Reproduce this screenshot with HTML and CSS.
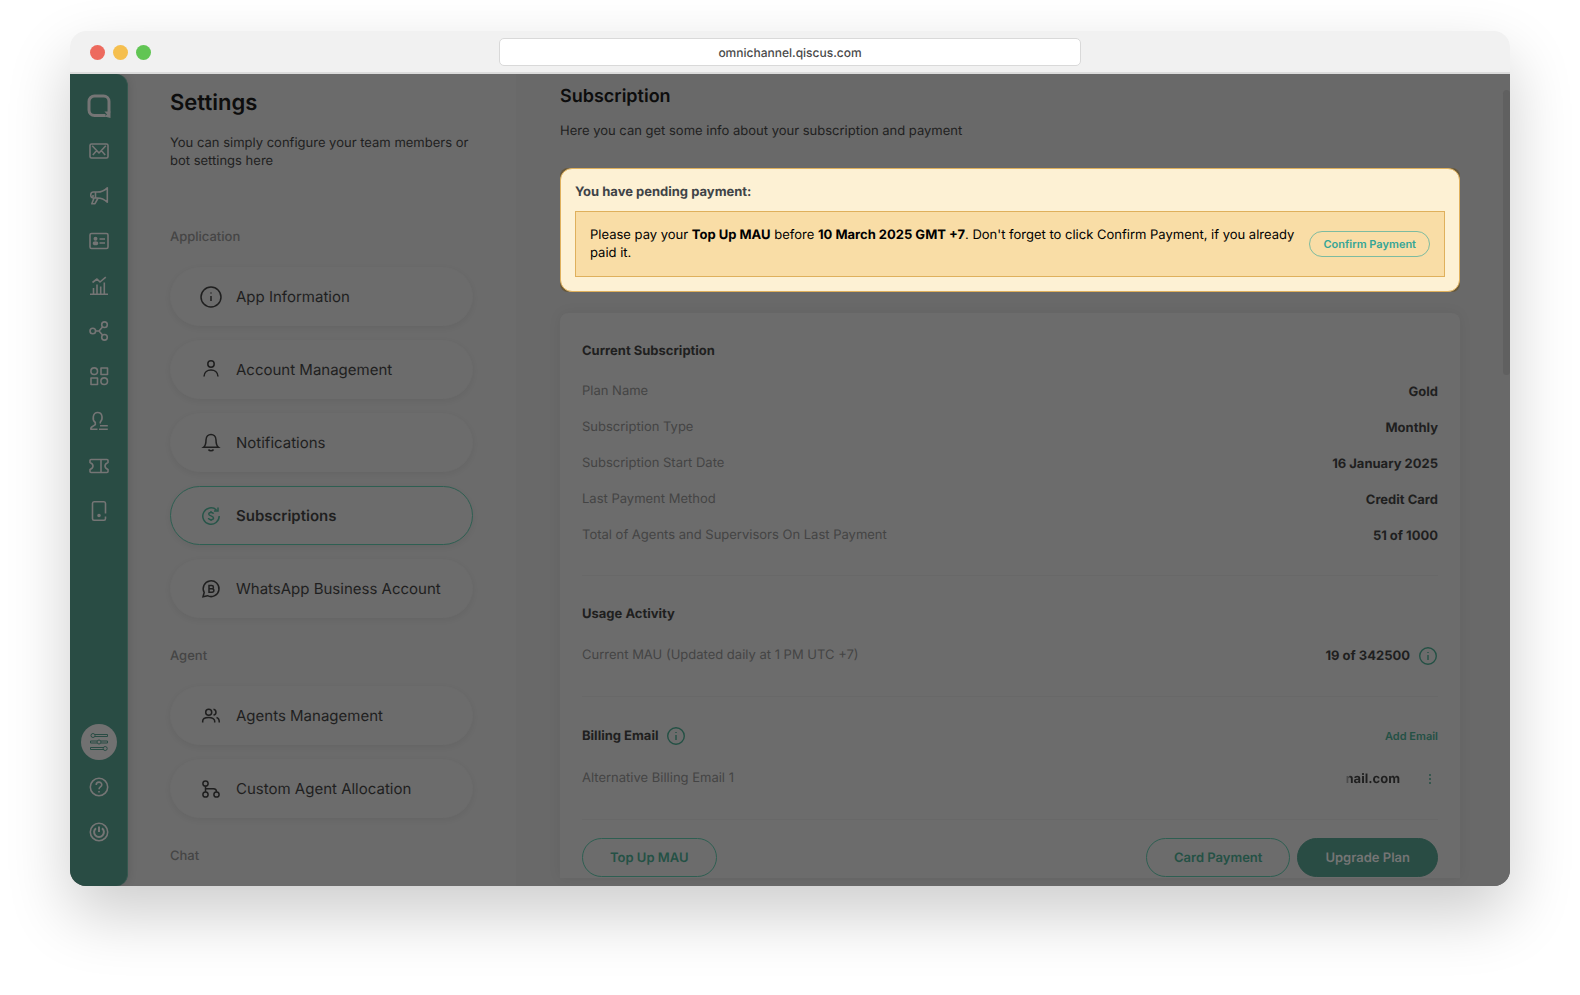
FILE: index.html
```html
<!DOCTYPE html>
<html lang="en">
<head>
<meta charset="utf-8">
<meta name="viewport" content="width=device-width, initial-scale=1">
<title>Subscription - Settings</title>
<link rel="stylesheet" href="styles.css">
</head>
<body>
<div class="window">
  <header class="titlebar">
    <div class="lights"><span class="light light-red"></span><span class="light light-yellow"></span><span class="light light-green"></span></div>
    <input class="address" type="text" aria-label="Address" value="omnichannel.qiscus.com">
  </header>
  <div class="app">
    <nav class="rail" aria-label="Main">
      <a class="rail-logo" href="#" aria-label="Home"><svg width="24" height="24" viewBox="0 0 24 24" fill="none" stroke="currentColor" stroke-width="3"><path d="M18.500 21.500H7.500A5.500 5.500 0 0 1 2 16V7.500A5.500 5.500 0 0 1 7.500 2H16.500A5.500 5.500 0 0 1 22 7.500V18.500"/><path d="M17.500 17.500H23.500V24L17.500 22.500L20 20.500Z" fill="currentColor" stroke="none"/></svg></a>
      <a href="#" aria-label="Inbox"><svg class="icon" viewBox="0 0 20 20"><rect x="1" y="3" width="18" height="14" rx="1.500"/><path d="M3.200 4.800L10 12L16.800 4.800M3.800 14L7.500 9.800M16.200 14L12.500 9.800"/></svg></a>
      <a href="#" aria-label="Broadcast"><svg class="icon" viewBox="0 0 20 20"><path d="M18.300 1.800V16.200C15.500 13.500 12 12 8.500 12H4.500C2.800 12 1.700 10.700 1.700 9S2.800 6 4.500 6H8.500C12 6 15.500 4.500 18.300 1.800ZM6.500 6V12M5 12L2.800 17.700H6L8.800 12.500M4 9V11"/></svg></a>
      <a href="#" aria-label="Contacts"><svg class="icon" viewBox="0 0 20 20"><rect x="1" y="2.500" width="18" height="15" rx="1.500"/><path d="M10.500 8H16M10.500 12H16"/><circle cx="6.500" cy="7.800" r="1.200" fill="currentColor"/><ellipse cx="6.500" cy="12.200" rx="2" ry="1.200" fill="currentColor"/></svg></a>
      <a href="#" aria-label="Analytics"><svg class="icon" viewBox="0 0 20 20"><path d="M1 18.300H19M4.500 18V12M8 18V8.500M11.700 18V10.500M15.300 18V6.500M3.500 6.500L8 3L11 6L16.800 1.200"/></svg></a>
      <a href="#" aria-label="Integration"><svg class="icon" viewBox="0 0 20 20"><circle cx="3.800" cy="10" r="2.800"/><circle cx="15.500" cy="3.700" r="2.800"/><circle cx="15.500" cy="16.300" r="2.800"/><path d="M6.600 10H10L13.500 6M10 10L13.500 14"/></svg></a>
      <a href="#" aria-label="App center"><svg class="icon" viewBox="0 0 20 20"><circle cx="5.200" cy="5.200" r="3.300"/><rect x="12" y="2" width="6.500" height="6.500"/><rect x="2" y="12" width="6.500" height="6.500"/><circle cx="15.200" cy="15.200" r="3.300"/></svg></a>
      <a href="#" aria-label="Agents"><svg class="icon" viewBox="0 0 20 20"><path d="M8.500 18.300H1.800C1.500 15 4 15.800 6.300 13.700V11.500C3 9 3.500 1.500 8.700 1.500S14 8.500 11.300 11V12.500M11 14.700H18.800M10 18.300H18.800"/></svg></a>
      <a href="#" aria-label="Tickets"><svg class="icon" viewBox="0 0 20 20"><path d="M2 3.500H18Q19 3.500 19 4.500V6.500C15 8 15 12 19 13.500V15.500Q19 16.500 18 16.500H2Q1 16.500 1 15.500V13.500C5 12 5 8 1 6.500V4.500Q1 3.500 2 3.500ZM12 3.500V16.500"/></svg></a>
      <a href="#" aria-label="Mobile"><svg class="icon" viewBox="0 0 20 20"><path d="M16.500 12.500V2.500Q16.500 .8 15 .8H5Q3.500 .8 3.500 2.500V17.500Q3.500 19.200 5 19.200H15Q16.500 19.200 16.500 17.500V15.500"/><circle cx="10" cy="14.500" r="1" fill="currentColor"/></svg></a>
      <a class="rail-active" href="#" aria-label="Settings"><svg class="icon icon-thin" viewBox="0 0 20 20"><circle cx="4" cy="3.500" r="2"/><path d="M6 2.500H18.500V4.500H6"/><circle cx="10" cy="10" r="2"/><path d="M8 9H1.500V11H8M12 9H18.500V11H12"/><circle cx="16.200" cy="16.500" r="2"/><path d="M14.200 15.500H1.500V17.500H14.200"/></svg></a>
      <a href="#" aria-label="Help"><svg class="icon" viewBox="0 0 20 20"><circle cx="10" cy="10" r="8.700"/><path d="M7.200 8C7.200 4.200 12.800 4.200 12.800 7.800C12.800 10 10 10 10 12.300M10 14V15.500"/></svg></a>
      <a href="#" aria-label="Log out"><svg class="icon" viewBox="0 0 20 20"><circle cx="10" cy="10" r="8.700"/><path d="M7 6.200A4.900 4.900 0 1 0 13 6.200M10 4.500V10" stroke-width="2"/></svg></a>
    </nav>

    <aside class="settings">
      <h1>Settings</h1>
      <p class="intro">You can simply configure your team members or bot settings here</p>
      <h2>Application</h2>
      <div class="menu">
        <a class="pill" href="#"><svg class="pill-icon" viewBox="0 0 26 26"><circle cx="13" cy="13" r="10"/><path d="M13 12V17M13 8.500V9.500"/></svg>App Information</a>
        <a class="pill" href="#"><svg class="pill-icon" viewBox="0 0 26 26"><circle cx="13" cy="7" r="3.200"/><path d="M6 19.500C6.300 10.800 19.700 10.800 20 19.500"/></svg>Account Management</a>
        <a class="pill" href="#"><svg class="pill-icon" viewBox="0 0 26 26"><path d="M5.500 17.300H20.500C18.200 15.500 18 13.500 18 10C18 2.700 8 2.700 8 10C8 13.500 7.800 15.500 5.500 17.300ZM10.500 19.500C11.500 21.200 14.500 21.200 15.500 19.500"/></svg>Notifications</a>
        <a class="pill pill-current" href="#" aria-current="page"><svg class="pill-icon" viewBox="0 0 26 26"><path d="M18.500 7A8.200 8.200 0 1 0 21.200 13M20 4.500V8H16M15.500 10.800C15 8.800 10.500 9 10.800 11.200C11 13.300 15.500 12.500 15.500 15C15.500 17.300 10.800 17.300 10.500 15M13 8V9.500M13 16.500V18"/></svg>Subscriptions</a>
        <a class="pill" href="#"><svg class="pill-icon" viewBox="0 0 26 26"><path d="M5 20.700L6.200 16.500A7.900 7.900 0 1 1 9.500 19.700Z"/><path d="M11 9.500H13.700C16 9.500 16 12.800 13.700 12.800H11ZM11 12.800H14C16.500 12.800 16.500 16.200 14 16.200H11Z"/></svg>WhatsApp Business Account</a>
      </div>
      <h2>Agent</h2>
      <div class="menu">
        <a class="pill" href="#"><svg class="pill-icon" viewBox="0 0 26 26"><circle cx="10.700" cy="9.200" r="3"/><path d="M4.700 19.500V18C4.700 13.300 16.700 13.300 16.700 18V19.500M15.500 6.300C18.800 6.800 18.800 11.500 15.500 12M18.500 14.500C20.500 15 21.300 16.500 21.300 19.500"/></svg>Agents Management</a>
        <a class="pill" href="#"><svg class="pill-icon" viewBox="0 0 26 26"><circle cx="7.500" cy="7.500" r="2.600"/><circle cx="7.500" cy="18.500" r="2.600"/><circle cx="18.500" cy="18.500" r="2.600"/><path d="M7.500 10V16M7.500 12.800H15.500Q18.500 12.800 18.500 16"/></svg>Custom Agent Allocation</a>
      </div>
      <h2>Chat</h2>
    </aside>

    <main class="main">
      <h1>Subscription</h1>
      <p class="lead">Here you can get some info about your subscription and payment</p>

      <div class="notice-frame">
        <section class="notice">
          <h2>You have pending payment:</h2>
          <div class="notice-item">
            <p>Please pay your <strong>Top Up MAU</strong> before <strong>10 March 2025 GMT +7</strong>. Don't forget to click Confirm Payment, if you already paid it.</p>
            <button class="btn-small" type="button">Confirm Payment</button>
          </div>
        </section>
      </div>

      <section class="card">
        <div class="block">
          <h2>Current Subscription</h2>
          <dl class="facts">
            <div><dt>Plan Name</dt><dd>Gold</dd></div>
            <div><dt>Subscription Type</dt><dd>Monthly</dd></div>
            <div><dt>Subscription Start Date</dt><dd>16 January 2025</dd></div>
            <div><dt>Last Payment Method</dt><dd>Credit Card</dd></div>
            <div><dt>Total of Agents and Supervisors On Last Payment</dt><dd>51 of 1000</dd></div>
          </dl>
        </div>
        <div class="block">
          <h2>Usage Activity</h2>
          <dl class="facts facts-tall">
            <div><dt>Current MAU (Updated daily at 1 PM UTC +7)</dt><dd>19 of 342500 <svg class="info" viewBox="0 0 20 20"><circle cx="10" cy="10" r="8.300"/><path d="M10 9V14M10 6V7"/></svg></dd></div>
          </dl>
        </div>
        <div class="block">
          <div class="block-head">
            <h2>Billing Email <svg class="info" viewBox="0 0 20 20"><circle cx="10" cy="10" r="8.300"/><path d="M10 9V14M10 6V7"/></svg></h2>
            <a class="add" href="#">Add Email</a>
          </div>
          <dl class="facts facts-tall">
            <div><dt>Alternative Billing Email 1</dt><dd><span class="email">nail.com</span><button class="more" type="button" aria-label="Email options"><svg width="4" height="10" viewBox="0 0 4 10" fill="currentColor"><circle cx="2" cy="1" r="1"/><circle cx="2" cy="5" r="1"/><circle cx="2" cy="9" r="1"/></svg></button></dd></div>
          </dl>
        </div>
        <div class="actions">
          <button class="btn" type="button">Top Up MAU</button>
          <button class="btn btn-push" type="button">Card Payment</button>
          <button class="btn btn-solid" type="button">Upgrade Plan</button>
        </div>
      </section>
      <span class="scroll-thumb"></span>
    </main>
  </div>
</div>
</body>
</html>
```
FILE: styles.css
```css
* { box-sizing: border-box; }
body {
  margin: 0;
  height: 100vh;
  padding: 31px 70px 109px;
  background: #fff;
  font: 13px/18px Inter, sans-serif;
  text-rendering: geometricPrecision;
  color: #1f1f1f;
  overflow: hidden;
}
h1, h2, p, dl, dd { margin: 0; }
a { color: inherit; text-decoration: none; }
button, input { font-family: inherit; text-rendering: inherit; }
button { cursor: pointer; }

.window {
  display: flex;
  flex-direction: column;
  height: 100%;
  border-radius: 16px;
  box-shadow: 0 28px 64px rgba(0, 0, 0, .2);
}

.titlebar {
  display: grid;
  grid-template-columns: 1fr 582px 1fr;
  align-items: center;
  height: 43px;
  flex: none;
  padding: 1px 20px 0;
  background: #f1f1f1;
  border-bottom: 2px solid #dcdcdc;
  border-radius: 16px 16px 0 0;
}
.lights { display: flex; gap: 8px; }
.light { width: 15px; height: 15px; border-radius: 50%; }
.light-red { background: #ed6a5e; }
.light-yellow { background: #f5bf4f; }
.light-green { background: #61c554; }
.address {
  width: 100%;
  height: 28px;
  border: 1px solid #d9d9d9;
  border-radius: 5px;
  background: #fff;
  color: #4a4a4a;
  font-size: 12px;
  font-weight: 500;
  text-align: center;
}

.app {
  flex: 1;
  min-height: 0;
  display: flex;
  border-radius: 0 0 16px 16px;
  background: #6b6b6b;
  overflow: hidden;
}

.rail {
  display: flex;
  flex-direction: column;
  align-items: center;
  width: 58px;
  flex: none;
  padding: 20px 0 42px;
  gap: 21px;
  background: #294c44;
  color: #757575;
  border-right: 1px solid #35584f;
  border-radius: 0 12px 12px 0;
  box-shadow: 0 0 10px rgba(0, 0, 0, .14);
  z-index: 1;
}
.rail a { display: grid; place-items: center; height: 24px; }
.icon {
  width: 20px;
  height: 20px;
  fill: none;
  stroke: currentColor;
  stroke-width: 1.6;
  stroke-linejoin: round;
}
.icon-thin { stroke-width: 1; }
.rail .rail-active {
  width: 36px;
  height: 36px;
  margin: auto 0 -6px;
  border-radius: 50%;
  background: #717171;
  color: #294c44;
}

.settings {
  width: 388px;
  flex: none;
  padding: 15px 43px 0 42px;
  overflow: hidden;
}
.settings h1 {
  color: #0d0d0d;
  font-size: 22px;
  line-height: 28px;
  font-weight: 600;
}
.intro { margin-top: 17px; }
.settings h2 {
  margin: 28px 0 20px;
  color: #454545;
  font-size: 13px;
  line-height: 20px;
  font-weight: 500;
}
.settings .intro + h2 { margin-top: 57px; }
.menu { display: grid; gap: 14px; }
.pill {
  display: flex;
  align-items: center;
  gap: 12px;
  height: 59px;
  padding: 0 27px;
  border: 1px solid #6c6c6c;
  border-radius: 30px;
  background: #6c6c6c;
  box-shadow: 0 2px 6px rgba(0, 0, 0, .06);
  font-size: 15px;
}
.pill-icon {
  width: 26px;
  height: 26px;
  fill: none;
  stroke: currentColor;
  stroke-width: 1.5;
}
.pill-current { border-color: #2e5f52; font-weight: 600; }
.pill-current .pill-icon { color: #275549; }

.main {
  position: relative;
  flex: 1;
  min-width: 0;
  display: flex;
  flex-direction: column;
  padding: 11px 50px 8px 44px;
  background: #696969;
}
.main h1 {
  color: #0d0d0d;
  font-size: 18px;
  line-height: 24px;
  font-weight: 600;
}
.lead { margin: 13px 0 28px; }

.notice-frame {
  margin-bottom: 21px;
  border-radius: 8px;
  background: #67583b;
}
.notice {
  padding: 14px;
  border: 1px solid #dfb05c;
  border-radius: 12px;
  background: #fdf1d4;
}
.notice h2 {
  margin-bottom: 10px;
  color: #3f4347;
  font-size: 13px;
  line-height: 18px;
  font-weight: 700;
}
.notice-item {
  display: flex;
  align-items: center;
  gap: 8px;
  padding: 14px;
  border: 1px solid #dfb05c;
  background: #f9dda6;
  color: #000;
}
.notice-item p { flex: 1; }
.notice-item strong { font-weight: 700; }
.btn-small {
  height: 26px;
  padding: 0 13px;
  border: 1px solid #7dbba0;
  border-radius: 13px;
  background: none;
  color: #35a596;
  font-size: 11px;
  font-weight: 600;
}

.card {
  flex: 1;
  min-height: 0;
  padding: 29px 22px 0;
  border-radius: 8px 8px 0 0;
  background: #6c6c6c;
  box-shadow: 0 0 14px rgba(0, 0, 0, .06);
}
.card h2 {
  display: flex;
  align-items: center;
  gap: 8px;
  font-size: 13px;
  line-height: 18px;
  font-weight: 700;
}
.block {
  padding-bottom: 31px;
  margin-bottom: 29px;
  border-bottom: 1px solid #686868;
}
.block:nth-of-type(3) { margin-bottom: 18px; }
.block-head { display: flex; align-items: center; justify-content: space-between; }
.facts { display: grid; gap: 18px; margin-top: 22px; }
.facts > div { display: flex; align-items: center; justify-content: space-between; height: 18px; }
.facts-tall > div { height: 20px; }
.facts dt { color: #444; }
.facts dd { display: flex; align-items: center; gap: 8px; padding-top: 2px; font-weight: 700; }
.info {
  width: 20px;
  height: 20px;
  fill: none;
  stroke: #245145;
  stroke-width: 1.4;
}
.add { color: #245145; font-size: 11px; font-weight: 600; }
.email { mask-image: linear-gradient(90deg, transparent, #000 6px); }
.more {
  display: grid;
  place-items: center;
  width: 16px;
  height: 18px;
  margin-left: 14px;
  padding: 0;
  border: 0;
  background: none;
  color: #245145;
}
.actions { display: flex; gap: 7px; }
.btn {
  height: 39px;
  padding: 0 27px;
  border: 1px solid #2e5f52;
  border-radius: 20px;
  background: none;
  color: #245145;
  font-size: 13px;
  font-weight: 600;
}
.btn-push { margin-left: auto; }
.btn-solid { border-color: #294c44; background: #294c44; color: #757575; }

.scroll-thumb {
  position: absolute;
  top: 16px;
  right: 0;
  width: 7px;
  height: 285px;
  border-radius: 4px;
  background: #606060;
}
```
